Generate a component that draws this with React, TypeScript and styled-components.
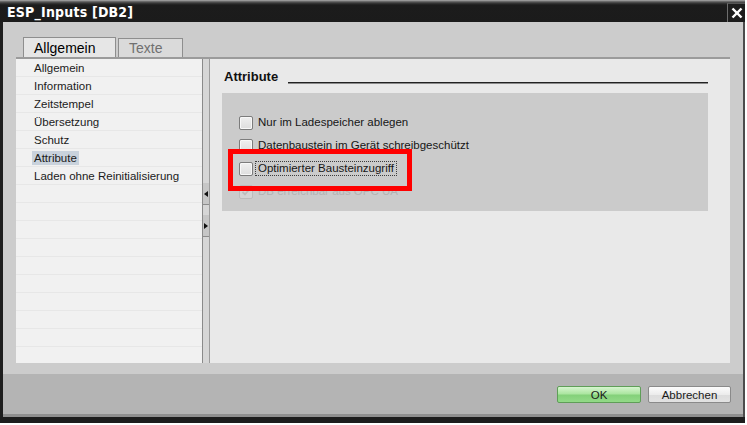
import React from "react";
import styled, { createGlobalStyle, css } from "styled-components";

const Global = createGlobalStyle`
  html, body { margin: 0; padding: 0; background: #ffffff; }
  body { font-family: "Liberation Sans", Arial, sans-serif; }
  * { box-sizing: border-box; }
`;

const Dialog = styled.div`
  width: 745px;
  height: 423px;
  display: flex;
  flex-direction: column;
`;

const TitleBar = styled.div`
  height: 22px;
  display: flex;
  align-items: center;
  justify-content: space-between;
  background: linear-gradient(#b4b4b4 0px, #7a7a7a 1px, #3a3a3a 3px, #1c1c1c 5px, #1b1b1b 100%);
  padding: 2px 0 0 7px;
`;

const Title = styled.div`
  color: #ffffff;
  font-family: "Liberation Sans Narrow", "DejaVu Sans Condensed", "Liberation Sans", sans-serif;
  font-weight: bold;
  font-size: 14px;
  letter-spacing: 0.2px;
`;

const CloseButton = styled.div`
  width: 18px;
  height: 19px;
  border-left: 1px solid #6e6e6e;
  border-top: 1px solid #555;
  display: flex;
  align-items: center;
  justify-content: center;
  background: #1d1d1d;
`;

const Main = styled.div`
  flex: 1;
  display: flex;
  flex-direction: column;
  border-left: 3px solid #1e1e1e;
  border-right: 2px solid #4c4c4c;
`;

const Body = styled.div`
  height: 352px;
  background: #cccccc;
  padding: 15px 13px 11px 13px;
  display: flex;
  flex-direction: column;
`;

const TabStrip = styled.div`
  height: 20px;
  display: flex;
  align-items: flex-end;
  gap: 2px;
  padding-left: 7px;
`;

const Tab = styled.div<{ $active?: boolean }>`
  font-size: 14px;
  padding: 0 0 0 10px;
  border: 1px solid #8e8e8e;
  border-bottom: none;
  display: flex;
  align-items: center;
  ${(p) =>
    p.$active
      ? css`
          width: 93px;
          height: 21px;
          background: #e6e6e6;
          color: #000;
          margin-bottom: -1px;
        `
      : css`
          width: 65px;
          height: 19px;
          background: #dadada;
          color: #707070;
        `}
`;

const Panel = styled.div`
  height: 306px;
  display: flex;
  border-top: 2px solid #9b9b9b;
  position: relative;
  z-index: 1;
`;

const NavList = styled.div`
  width: 187px;
  background: #f1f1f1;
  border-right: 1px solid #8a8a8a;
  overflow: hidden;
`;

const NavRow = styled.div`
  height: 18px;
  border-bottom: 1px solid #e7e7e7;
  padding-left: 18px;
  display: flex;
  align-items: center;
  font-size: 11.5px;
  color: #1b1b1b;
`;

const NavText = styled.span<{ $selected?: boolean }>`
  padding: 1px 2px;
  margin-left: -2px;
  background: ${(p) => (p.$selected ? "#c9d2dc" : "transparent")};
`;

const Splitter = styled.div`
  width: 7px;
  background: #d6d6d6;
  border-right: 1px solid #9c9c9c;
  display: flex;
  flex-direction: column;
  padding-top: 124px;
  gap: 10px;
`;

const Grip = styled.div`
  height: 22px;
  background: #c6c6c6;
  border-bottom: 1px solid #8c8c8c;
  display: flex;
  align-items: center;
  justify-content: center;
`;

const Detail = styled.div`
  flex: 1;
  background: #e9e9e9;
  padding: 10px 22px 0 12px;
`;

const Heading = styled.div`
  display: flex;
  align-items: flex-end;
  height: 16px;
  padding-left: 2px;
`;

const HeadingText = styled.div`
  font-size: 13px;
  font-weight: bold;
  color: #111;
  line-height: 16px;
`;

const Rule = styled.div`
  flex: 1;
  margin-left: 10px;
  margin-bottom: 1px;
  height: 2px;
  border-top: 1px solid #222;
  border-bottom: 1px solid #8a8a8a;
`;

const Group = styled.div`
  position: relative;
  margin-top: 8px;
  background: #cbcbcb;
  padding: 18px 0 8px 17px;
`;

const CheckRow = styled.div`
  height: 23px;
  display: flex;
  align-items: center;
  font-size: 11.5px;
`;

const Box = styled.div<{ $disabled?: boolean }>`
  width: 14px;
  height: 14px;
  border-radius: 2px;
  border: 1px solid ${(p) => (p.$disabled ? "#bcbcbc" : "#7c7c7c")};
  background: ${(p) =>
    p.$disabled ? "#d4d4d4" : "linear-gradient(#f0f0f0, #dedede)"};
  box-shadow: ${(p) => (p.$disabled ? "none" : "inset 0 0 0 1px #f8f8f8")};
  display: flex;
  align-items: center;
  justify-content: center;
`;

const Label = styled.span<{ $focus?: boolean; $disabled?: boolean }>`
  color: ${(p) => (p.$disabled ? "#b3b3b3" : "#161616")};
  line-height: 13px;
  ${(p) =>
    p.$focus
      ? css`
          margin-left: 2px;
          padding: 0 2px;
          border: 1px dotted #3c3c3c;
        `
      : css`
          margin-left: 5px;
        `}
`;

const Annotation = styled.div`
  position: absolute;
  left: 6px;
  top: 56px;
  width: 184px;
  height: 42px;
  border: 5px solid #ff0000;
  pointer-events: none;
`;

const Footer = styled.div`
  height: 43px;
  background: #b4b4b4;
  border-bottom: 3px solid #8f8f8f;
  display: flex;
  justify-content: flex-end;
  align-items: flex-start;
  gap: 7px;
  padding: 12px 12px 0 0;
`;

const Button = styled.div<{ $primary?: boolean }>`
  width: ${(p) => (p.$primary ? 84 : 83)}px;
  height: 17px;
  border-radius: 2px;
  font-size: 11.5px;
  color: #1a1a1a;
  display: flex;
  align-items: center;
  justify-content: center;
  ${(p) =>
    p.$primary
      ? css`
          border: 1px solid #5f9e58;
          background: linear-gradient(#d6f5cf 0%, #ace6a1 45%, #84d17a 55%, #93da88 100%);
        `
      : css`
          border: 1px solid #8a8a8a;
          background: linear-gradient(#fcfcfc 0%, #ececec 50%, #dcdcdc 51%, #e2e2e2 100%);
        `}
`;

const BottomBar = styled.div`
  height: 6px;
  background: #1d1d1d;
`;

const navItems = [
  "Allgemein",
  "Information",
  "Zeitstempel",
  "Übersetzung",
  "Schutz",
  "Attribute",
  "Laden ohne Reinitialisierung",
];

const Arrow = ({ dir }: { dir: "left" | "right" }) => (
  <svg width="4" height="6" viewBox="0 0 4 6">
    {dir === "left" ? (
      <polygon points="4,0 0,3 4,6" fill="#111" />
    ) : (
      <polygon points="0,0 4,3 0,6" fill="#111" />
    )}
  </svg>
);

const Check = () => (
  <svg width="10" height="10" viewBox="0 0 10 10">
    <polyline points="1.5,5 4,7.5 8.5,2" fill="none" stroke="#bdbdbd" strokeWidth="1.8" />
  </svg>
);

export default function App() {
  const filler = Array.from({ length: 10 });
  return (
    <>
      <Global />
      <Dialog>
        <TitleBar>
          <Title>ESP_Inputs [DB2]</Title>
          <CloseButton>
            <svg width="12" height="12" viewBox="0 0 12 12">
              <line x1="1.5" y1="1.5" x2="10.5" y2="10.5" stroke="#fff" strokeWidth="2.4" />
              <line x1="10.5" y1="1.5" x2="1.5" y2="10.5" stroke="#fff" strokeWidth="2.4" />
            </svg>
          </CloseButton>
        </TitleBar>
        <Main>
          <Body>
            <TabStrip>
              <Tab $active>Allgemein</Tab>
              <Tab>Texte</Tab>
            </TabStrip>
            <Panel>
              <NavList>
                {navItems.map((n) => (
                  <NavRow key={n}>
                    <NavText $selected={n === "Attribute"}>{n}</NavText>
                  </NavRow>
                ))}
                {filler.map((_, i) => (
                  <NavRow key={"f" + i} />
                ))}
              </NavList>
              <Splitter>
                <Grip>
                  <Arrow dir="left" />
                </Grip>
                <Grip>
                  <Arrow dir="right" />
                </Grip>
              </Splitter>
              <Detail>
                <Heading>
                  <HeadingText>Attribute</HeadingText>
                  <Rule />
                </Heading>
                <Group>
                  <CheckRow>
                    <Box />
                    <Label>Nur im Ladespeicher ablegen</Label>
                  </CheckRow>
                  <CheckRow>
                    <Box />
                    <Label>Datenbaustein im Gerät schreibgeschützt</Label>
                  </CheckRow>
                  <CheckRow>
                    <Box />
                    <Label $focus>Optimierter Bausteinzugriff</Label>
                  </CheckRow>
                  <CheckRow>
                    <Box $disabled>
                      <Check />
                    </Box>
                    <Label $disabled>DB erreichbar aus OPC UA</Label>
                  </CheckRow>
                  <Annotation />
                </Group>
              </Detail>
            </Panel>
          </Body>
          <Footer>
            <Button $primary>OK</Button>
            <Button>Abbrechen</Button>
          </Footer>
        </Main>
        <BottomBar />
      </Dialog>
    </>
  );
}
